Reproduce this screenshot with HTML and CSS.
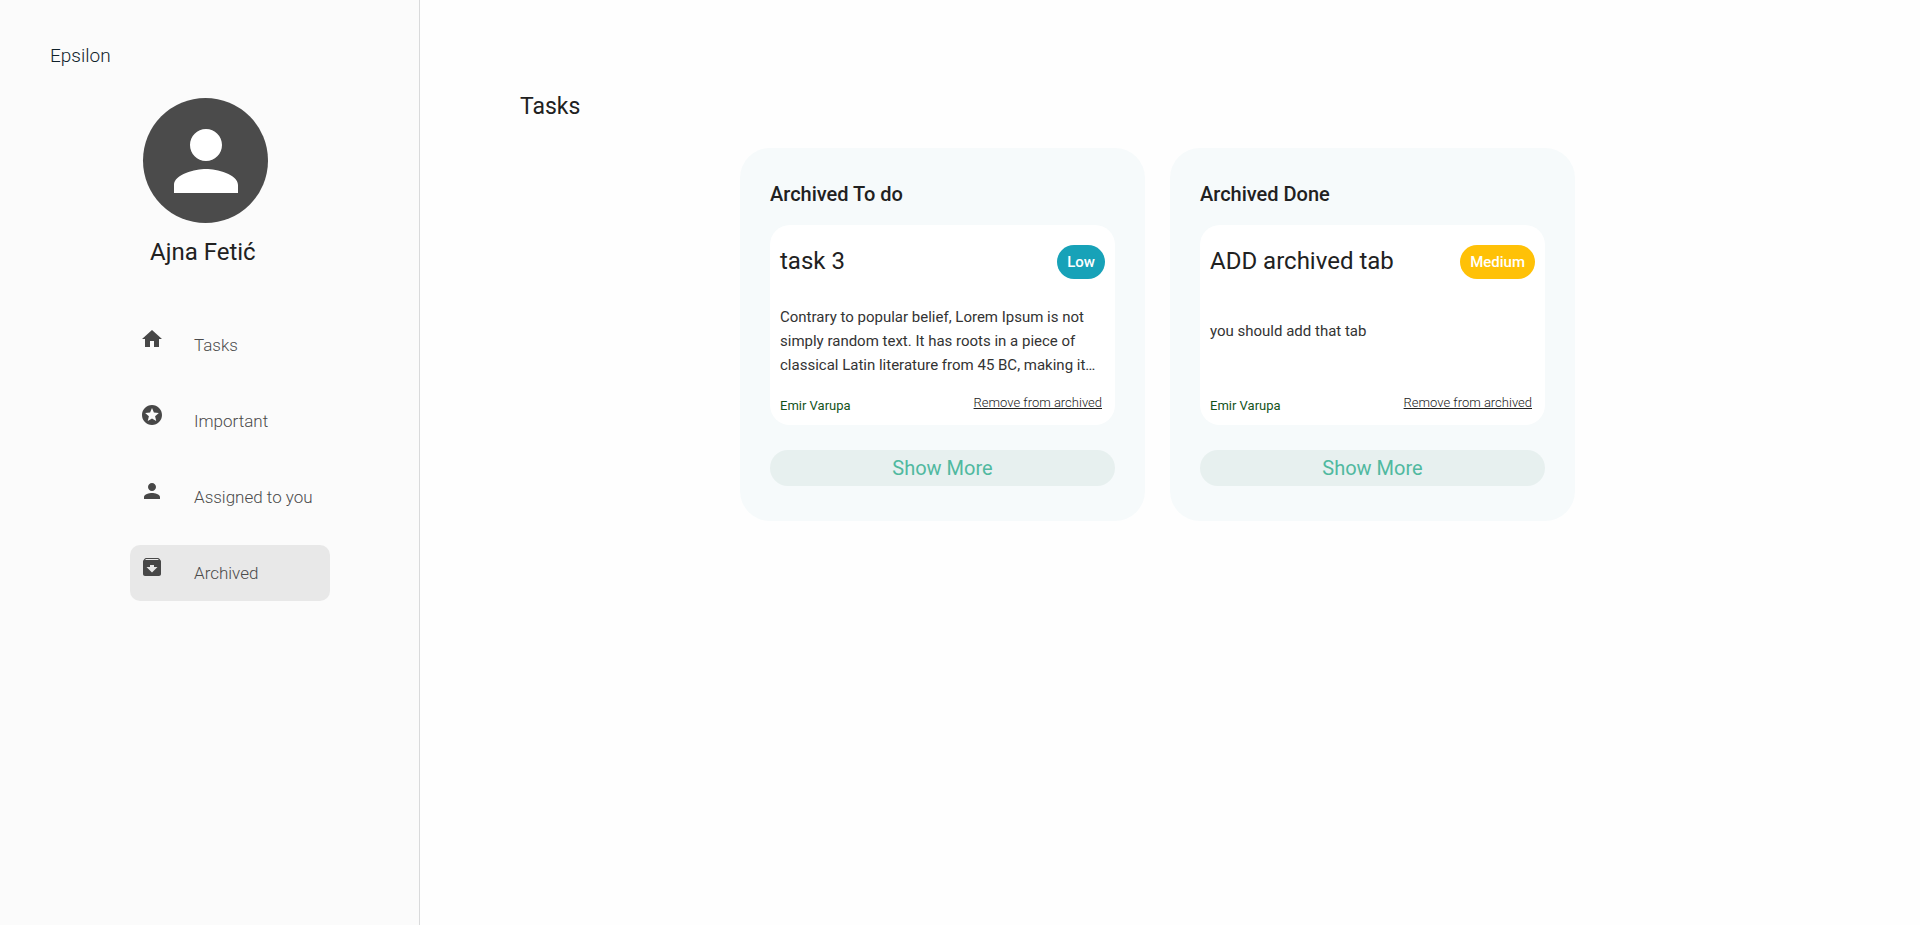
FILE: index.html
```html
<!DOCTYPE html>
<html lang="en">
<head>
<meta charset="utf-8">
<title>Epsilon</title>
<link rel="stylesheet" href="styles.css">
</head>
<body>
<div class="layout">
  <aside class="sidebar">
    <a class="brand" href="#">Epsilon</a>
    <div class="profile">
      <div class="avatar">
        <svg viewBox="0 0 24 24" aria-hidden="true"><path d="M12 12c2.21 0 4-1.79 4-4s-1.79-4-4-4-4 1.79-4 4 1.79 4 4 4zm0 2c-2.67 0-8 1.34-8 4v2h16v-2c0-2.66-5.33-4-8-4z"/></svg>
      </div>
      <div class="username">Ajna Fetić</div>
    </div>
    <nav class="nav">
      <a class="nav-item" href="#">
        <svg viewBox="0 0 24 24" aria-hidden="true"><path d="M10 20v-6h4v6h5v-8h3L12 3 2 12h3v8z"/></svg>
        <span>Tasks</span>
      </a>
      <a class="nav-item" href="#">
        <svg viewBox="0 0 24 24" aria-hidden="true"><path d="M11.99 2C6.47 2 2 6.48 2 12s4.47 10 9.99 10C17.52 22 22 17.52 22 12S17.52 2 11.99 2zm4.24 16L12 15.45 7.77 18l1.12-4.81-3.73-3.23 4.92-.42L12 5l1.92 4.53 4.92.42-3.73 3.23L16.23 18z"/></svg>
        <span>Important</span>
      </a>
      <a class="nav-item" href="#">
        <svg viewBox="0 0 24 24" aria-hidden="true"><path d="M12 12c2.21 0 4-1.79 4-4s-1.79-4-4-4-4 1.79-4 4 1.79 4 4 4zm0 2c-2.67 0-8 1.34-8 4v2h16v-2c0-2.66-5.33-4-8-4z"/></svg>
        <span>Assigned to you</span>
      </a>
      <a class="nav-item active" href="#" aria-current="page">
        <svg viewBox="0 0 24 24" aria-hidden="true"><path d="M20.54 5.23l-1.39-1.68C18.88 3.21 18.47 3 18 3H6c-.47 0-.88.21-1.16.55L3.46 5.23C3.17 5.57 3 6.02 3 6.5V19c0 1.1.9 2 2 2h14c1.1 0 2-.9 2-2V6.5c0-.48-.17-.93-.46-1.27zM12 17.500L6.500 12H10v-2h4v2h3.500L12 17.500zM5.120 5l.81-1h12l.94 1H5.120z"/></svg>
        <span>Archived</span>
      </a>
    </nav>
  </aside>
  <main class="main">
    <h1 class="page-title">Tasks</h1>
    <div class="board">
      <section class="panel">
        <h2 class="panel-title">Archived To do</h2>
        <article class="card">
          <header class="card-head">
            <h3 class="card-title">task 3</h3>
            <span class="badge low">Low</span>
          </header>
          <div class="card-body"><p>Contrary to popular belief, Lorem Ipsum is not simply random text. It has roots in a piece of classical Latin literature from 45 BC, making it…</p></div>
          <footer class="card-foot">
            <span class="author">Emir Varupa</span>
            <a class="remove" href="#">Remove from archived</a>
          </footer>
        </article>
        <button class="more" type="button">Show More</button>
      </section>
      <section class="panel">
        <h2 class="panel-title">Archived Done</h2>
        <article class="card">
          <header class="card-head">
            <h3 class="card-title">ADD archived tab</h3>
            <span class="badge medium">Medium</span>
          </header>
          <div class="card-body"><p>you should add that tab</p></div>
          <footer class="card-foot">
            <span class="author">Emir Varupa</span>
            <a class="remove" href="#">Remove from archived</a>
          </footer>
        </article>
        <button class="more" type="button">Show More</button>
      </section>
    </div>
  </main>
</div>
</body>
</html>
```
FILE: styles.css
```css
* { box-sizing: border-box; }
body {
  margin: 0;
  background: #fefefe;
  color: #212121;
  font-family: Roboto, "Liberation Sans", sans-serif;
}
h1, h2, h3, p { margin: 0; }
a { color: inherit; text-decoration: none; }
.layout { display: flex; min-height: 100vh; }

.sidebar {
  flex: 0 0 420px;
  padding-top: 40px;
  background: #fbfbfb;
  border-right: 1px solid #d9dadb;
}
.brand {
  display: block;
  padding-left: 50px;
  font-size: 19px;
  font-weight: 300;
  line-height: 32px;
  color: #10222b;
}
.profile {
  display: flex;
  flex-direction: column;
  align-items: center;
  width: max-content;
  margin: 26px 0 0 143px;
}
.avatar {
  display: flex;
  align-items: center;
  justify-content: center;
  width: 125px;
  height: 125px;
  border-radius: 50%;
  background: #4b4b4b;
}
.avatar svg { width: 96px; height: 96px; fill: #fff; }
.username {
  align-self: flex-start;
  padding: 13px 0 0 7px;
  font-size: 24px;
  line-height: 32px;
}
.nav {
  display: flex;
  flex-direction: column;
  gap: 20px;
  width: 200px;
  margin: 49px 0 0 130px;
}
.nav-item {
  display: flex;
  gap: 30px;
  height: 56px;
  padding: 10px;
  border-radius: 10px;
  font-size: 17px;
  font-weight: 300;
  line-height: 36px;
  white-space: nowrap;
  color: #4b4b4b;
}
.nav-item svg { flex: none; width: 24px; height: 24px; fill: #474747; }
.nav-item.active { background: #e8e8e8; }

.main { flex: 1; padding: 88px 125px 40px 100px; }
.page-title { font-size: 23px; font-weight: 400; line-height: 38px; }
.board {
  display: flex;
  justify-content: center;
  align-items: flex-start;
  gap: 25px;
  margin-top: 22px;
}
.panel {
  flex: 0 1 405px;
  padding: 30px 30px 35px;
  border-radius: 30px;
  background: #f6fafb;
}
.panel-title { font-size: 20px; font-weight: 500; line-height: 32px; }
.card {
  display: flex;
  flex-direction: column;
  height: 200px;
  margin: 15px 0 25px;
  padding: 20px 10px 7px;
  border-radius: 20px;
  background: #fff;
}
.card-head { display: flex; justify-content: space-between; align-items: flex-start; }
.card-title { font-size: 24px; font-weight: 400; line-height: 32px; }
.badge {
  padding: 0 10px;
  border-radius: 17px;
  font-size: 15px;
  font-weight: 500;
  line-height: 34px;
  color: #fff;
}
.low { background: #17a2b8; }
.medium { background: #ffc107; }
.card-body {
  display: flex;
  align-items: center;
  min-height: 52px;
  margin-top: 26px;
  font-size: 15px;
  line-height: 24px;
  color: #333;
}
.card-foot {
  display: flex;
  justify-content: space-between;
  margin-top: auto;
  padding-right: 3px;
  font-size: 13px;
  line-height: 24px;
}
.author { padding-top: 3px; color: #14531b; }
.remove { font-weight: 300; text-decoration: underline; }
.more {
  display: block;
  width: 100%;
  height: 36px;
  padding: 0;
  border: 0;
  border-radius: 18px;
  background: #e7f0ef;
  color: #50b9a0;
  font: 400 20px/36px Roboto, "Liberation Sans", sans-serif;
}
```
